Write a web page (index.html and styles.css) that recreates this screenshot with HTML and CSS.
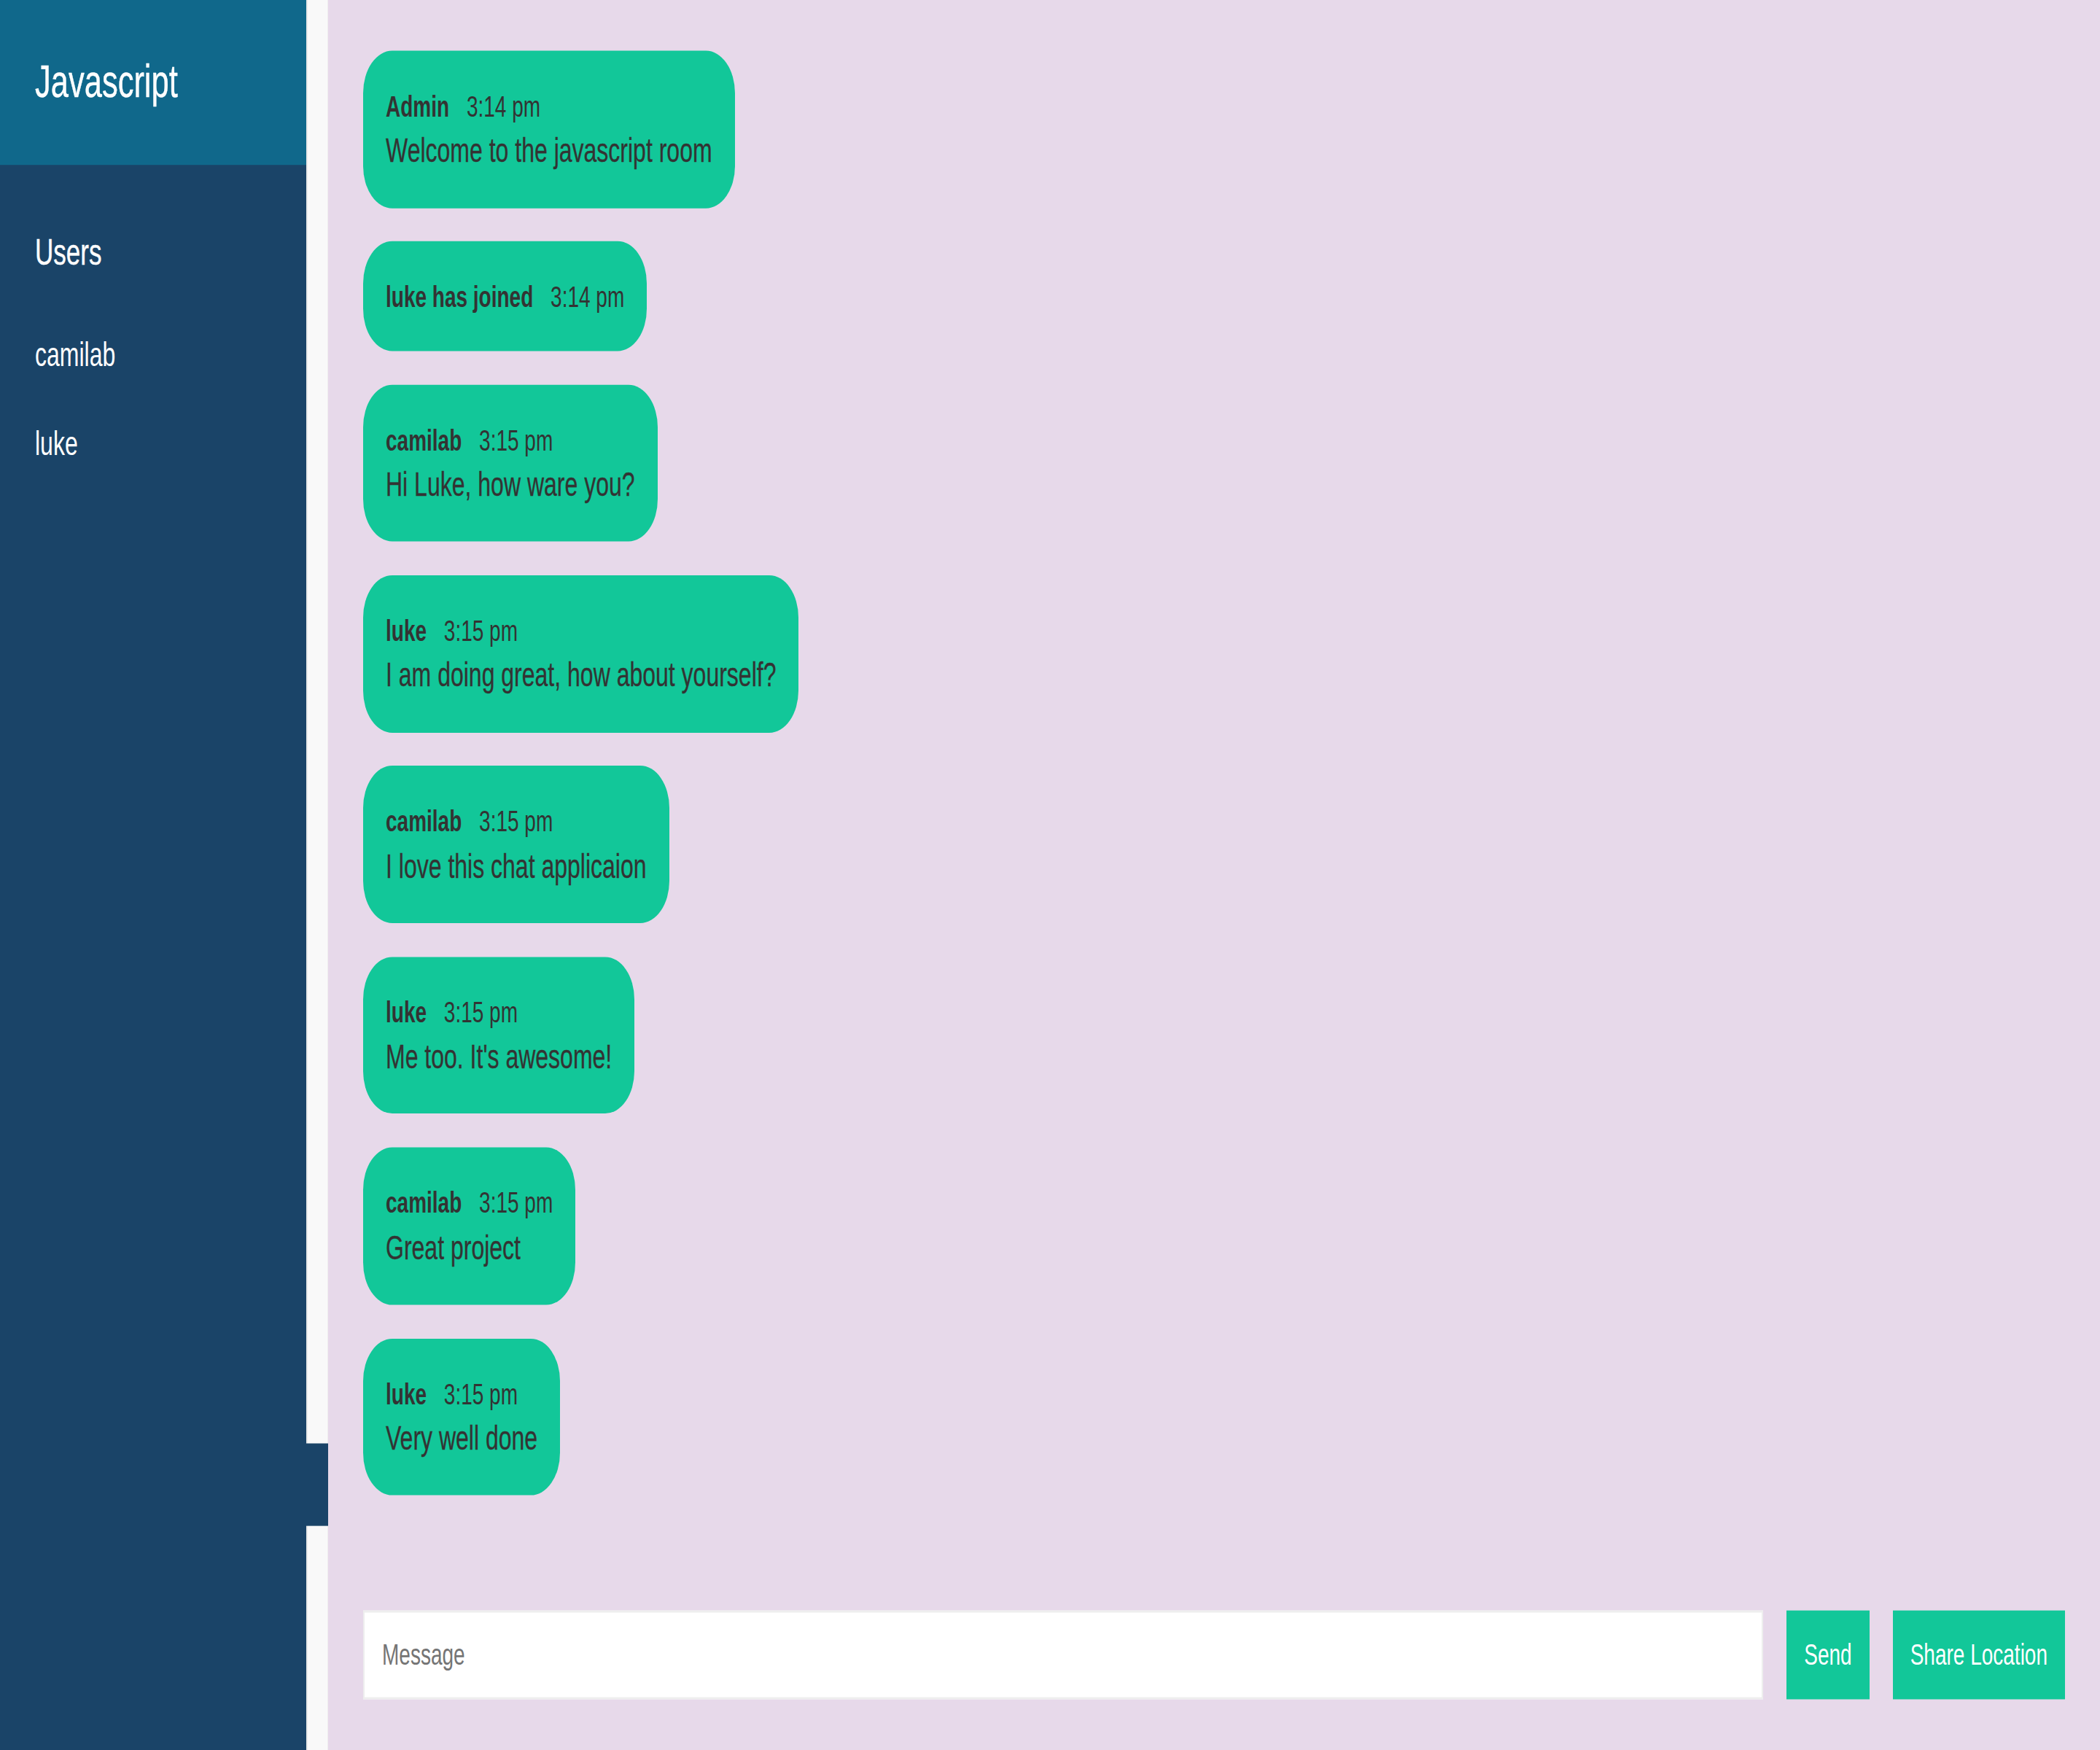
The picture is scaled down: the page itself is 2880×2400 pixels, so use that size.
FILE: index.html
```html
<!DOCTYPE html>
<html lang="en">
<head>
<meta charset="utf-8">
<title>Chat App</title>
<link rel="stylesheet" href="styles.css">
</head>
<body>
<div class="app">
  <aside class="sidebar">
    <h2 class="room-title">Javascript</h2>
    <h3 class="list-title">Users</h3>
    <ul class="users">
      <li>camilab</li>
      <li>luke</li>
    </ul>
  </aside>
  <div class="scrollbar"><div class="scrollbar-thumb"></div></div>
  <main class="chat">
    <div class="messages">
      <div class="message">
        <p class="meta"><span class="name">Admin</span> <span class="time">3:14 pm</span></p>
        <p class="text">Welcome to the javascript room</p>
      </div>
      <div class="message">
        <p class="meta"><span class="name">luke has joined</span> <span class="time">3:14 pm</span></p>
      </div>
      <div class="message">
        <p class="meta"><span class="name">camilab</span> <span class="time">3:15 pm</span></p>
        <p class="text">Hi Luke, how ware you?</p>
      </div>
      <div class="message">
        <p class="meta"><span class="name">luke</span> <span class="time">3:15 pm</span></p>
        <p class="text">I am doing great, how about yourself?</p>
      </div>
      <div class="message">
        <p class="meta"><span class="name">camilab</span> <span class="time">3:15 pm</span></p>
        <p class="text">I love this chat applicaion</p>
      </div>
      <div class="message">
        <p class="meta"><span class="name">luke</span> <span class="time">3:15 pm</span></p>
        <p class="text">Me too. It's awesome!</p>
      </div>
      <div class="message">
        <p class="meta"><span class="name">camilab</span> <span class="time">3:15 pm</span></p>
        <p class="text">Great project</p>
      </div>
      <div class="message">
        <p class="meta"><span class="name">luke</span> <span class="time">3:15 pm</span></p>
        <p class="text">Very well done</p>
      </div>
    </div>
    <form class="compose">
      <input class="compose-input" type="text" placeholder="Message">
      <button class="btn" type="button">Send</button>
      <button class="btn" type="button">Share Location</button>
    </form>
  </main>
</div>
</body>
</html>
```

FILE: styles.css
```css
* {
  margin: 0;
  padding: 0;
  box-sizing: border-box;
}

html {
  overflow: hidden;
  background: #ffffff;
}

body {
  margin: 0;
  height: 2400px;
  font-family: "Liberation Sans", Arial, Helvetica, sans-serif;
  color: #333333;
}

/* The whole app is laid out at 2880 x 1655 and stretched vertically */
.app {
  display: flex;
  width: 2880px;
  height: 1655px;
  transform: scaleY(1.4502);
  transform-origin: 0 0;
}

/* Sidebar */
.sidebar {
  width: 420px;
  flex-shrink: 0;
  background: #1a4468;
  color: #ffffff;
}

.room-title {
  height: 156px;
  padding: 46.5px 48px 0;
  background: #10688b;
  font-size: 43.5px;
  font-weight: 400;
  line-height: 61.6px;
  -webkit-text-stroke: 0.3px #ffffff;
}

.list-title {
  padding: 57px 48px 0;
  font-size: 35px;
  font-weight: 400;
  line-height: 50.4px;
  -webkit-text-stroke: 0.3px #ffffff;
}

.users {
  list-style: none;
  padding: 49.5px 48px 0;
}

.users li {
  font-size: 32px;
  line-height: 44.8px;
}

.users li + li {
  margin-top: 39.1px;
}

/* Sidebar scrollbar */
.scrollbar {
  width: 30px;
  flex-shrink: 0;
  background: #f9f9f9;
  border-left: 2px solid #e9e9e9;
  border-right: 1px solid #efefef;
}

.scrollbar-thumb {
  margin: 1365px -1px 0 -2px;
  height: 78.2px;
  background: #1a4468;
}

/* Chat main */
.chat {
  flex: 1;
  display: flex;
  flex-direction: column;
  background: #e7d9ea;
  min-width: 0;
}

.messages {
  flex: 1;
  display: flex;
  flex-direction: column;
  align-items: flex-start;
  gap: 31.8px;
  padding: 48px 48px 0;
  overflow: hidden;
}

.message {
  background: #12c799;
  border-radius: 40px;
  padding: 33px 31px 31px;
  color: #333333;
}

.meta {
  font-size: 28px;
  line-height: 39.4px;
  white-space: nowrap;
}

.name {
  font-weight: 700;
  margin-right: 16px;
}

.time {
  font-weight: 400;
}

.text {
  font-size: 32px;
  line-height: 45.2px;
  white-space: nowrap;
  -webkit-text-stroke: 0.2px #333333;
}

/* Compose bar */
.compose {
  display: flex;
  flex-shrink: 0;
  gap: 32px;
  padding: 48px;
}

.compose-input {
  flex: 1;
  min-width: 0;
  height: 84px;
  padding: 0 24px;
  border: 2px solid #eeeeee;
  background: #ffffff;
  font-family: "Liberation Sans", Arial, Helvetica, sans-serif;
  font-size: 28px;
  color: #333333;
  outline: none;
}

.compose-input::placeholder {
  color: #757575;
}

.btn {
  height: 84px;
  padding: 0 24px;
  border: none;
  background: #12c799;
  color: #ffffff;
  font-family: "Liberation Sans", Arial, Helvetica, sans-serif;
  font-size: 28px;
  cursor: pointer;
}
```
